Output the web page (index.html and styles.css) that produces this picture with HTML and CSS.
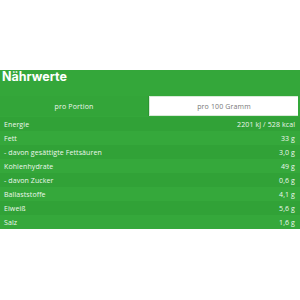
FILE: index.html
```html
<!DOCTYPE html>
<html lang="de">
<head>
<meta charset="utf-8">
<link rel="stylesheet" href="styles.css">
</head>
<body>
<section class="panel">
  <h2 class="title">Nährwerte</h2>
  <div class="tabs">
    <div class="tab">pro Portion</div>
    <div class="tab active">pro 100 Gramm</div>
  </div>
  <div class="rows">
    <div class="row"><span>Energie</span><span>2201 kJ / 528 kcal</span></div>
    <div class="row"><span>Fett</span><span>33 g</span></div>
    <div class="row"><span>- davon gesättigte Fettsäuren</span><span>3,0 g</span></div>
    <div class="row"><span>Kohlenhydrate</span><span>49 g</span></div>
    <div class="row"><span>- davon Zucker</span><span>0,6 g</span></div>
    <div class="row"><span>Ballaststoffe</span><span>4,1 g</span></div>
    <div class="row"><span>Eiweiß</span><span>5,6 g</span></div>
    <div class="row"><span>Salz</span><span>1,6 g</span></div>
  </div>
</section>
</body>
</html>
```
FILE: styles.css
```css
html, body { margin: 0; padding: 0; background: #fff; }
body { font-family: "Open Sans", "Inter", sans-serif; }
.panel {
  margin-top: 70px;
  background: #34a73a;
  color: #fff;
}
.title {
  margin: 0;
  padding: 0 0 0 2px;
  font-family: "Inter", sans-serif;
  font-size: 12.5px;
  font-weight: 700;
  line-height: 14px;
  height: 26px;
}
.tabs {
  display: grid;
  grid-template-columns: 149px 149px;
  height: 20px;
}
.tab {
  display: flex;
  align-items: center;
  justify-content: center;
  font-size: 7px;
  letter-spacing: 0.15px;
  color: #eef7ee;
  border-right: 1px solid #2c9532;
  background: #33a539;
}
.tab.active {
  background: #fff;
  color: #777;
  border: 1px solid #d8ead8;
  border-right: none;
}
.rows { display: flex; flex-direction: column; padding-top: 1px; }
.row {
  display: flex;
  justify-content: space-between;
  align-items: center;
  height: 14px;
  padding: 0 5px 0 4px;
  font-size: 7px;
  letter-spacing: 0.1px;
  color: #eef7ee;
}
.row:nth-child(odd) { background: #31a237; }
.row:nth-child(even) { background: #35a83b; }
```
